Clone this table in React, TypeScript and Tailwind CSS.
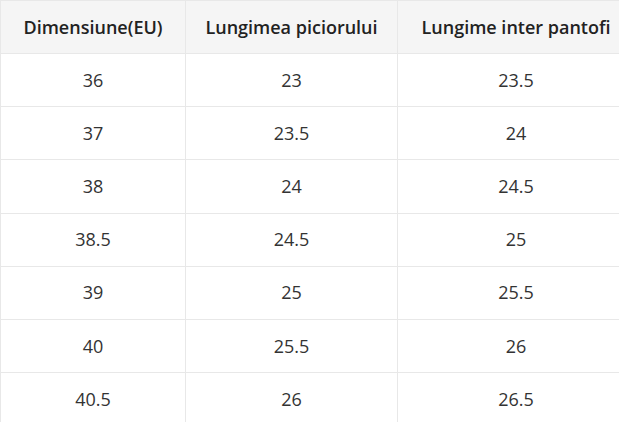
const rows = [
  ["36", "23", "23.5"],
  ["37", "23.5", "24"],
  ["38", "24", "24.5"],
  ["38.5", "24.5", "25"],
  ["39", "25", "25.5"],
  ["40", "25.5", "26"],
  ["40.5", "26", "26.5"],
];

export default function App() {
  return (
    <div className="w-[619px] h-[422px] overflow-hidden bg-white font-['Open_Sans',_'Noto_Sans',_sans-serif] text-[#333]">
      <table className="border-collapse table-fixed w-[634px] text-[18px]">
        <colgroup>
          <col className="w-[185px]" />
          <col className="w-[212px]" />
          <col className="w-[237px]" />
        </colgroup>
        <thead>
          <tr className="h-[53px] bg-[#f5f5f5]">
            <th className="border border-[#e8e8e8] font-semibold text-[#222] text-center">Dimensiune(EU)</th>
            <th className="border border-[#e8e8e8] font-semibold text-[#222] text-center">Lungimea piciorului</th>
            <th className="border border-[#e8e8e8] font-semibold text-[#222] text-center">Lungime inter pantofi</th>
          </tr>
        </thead>
        <tbody>
          {rows.map((r) => (
            <tr key={r[0]} className="h-[53.2px]">
              {r.map((c, i) => (
                <td key={i} className="border border-[#e8e8e8] text-center">
                  {c}
                </td>
              ))}
            </tr>
          ))}
        </tbody>
      </table>
    </div>
  );
}
